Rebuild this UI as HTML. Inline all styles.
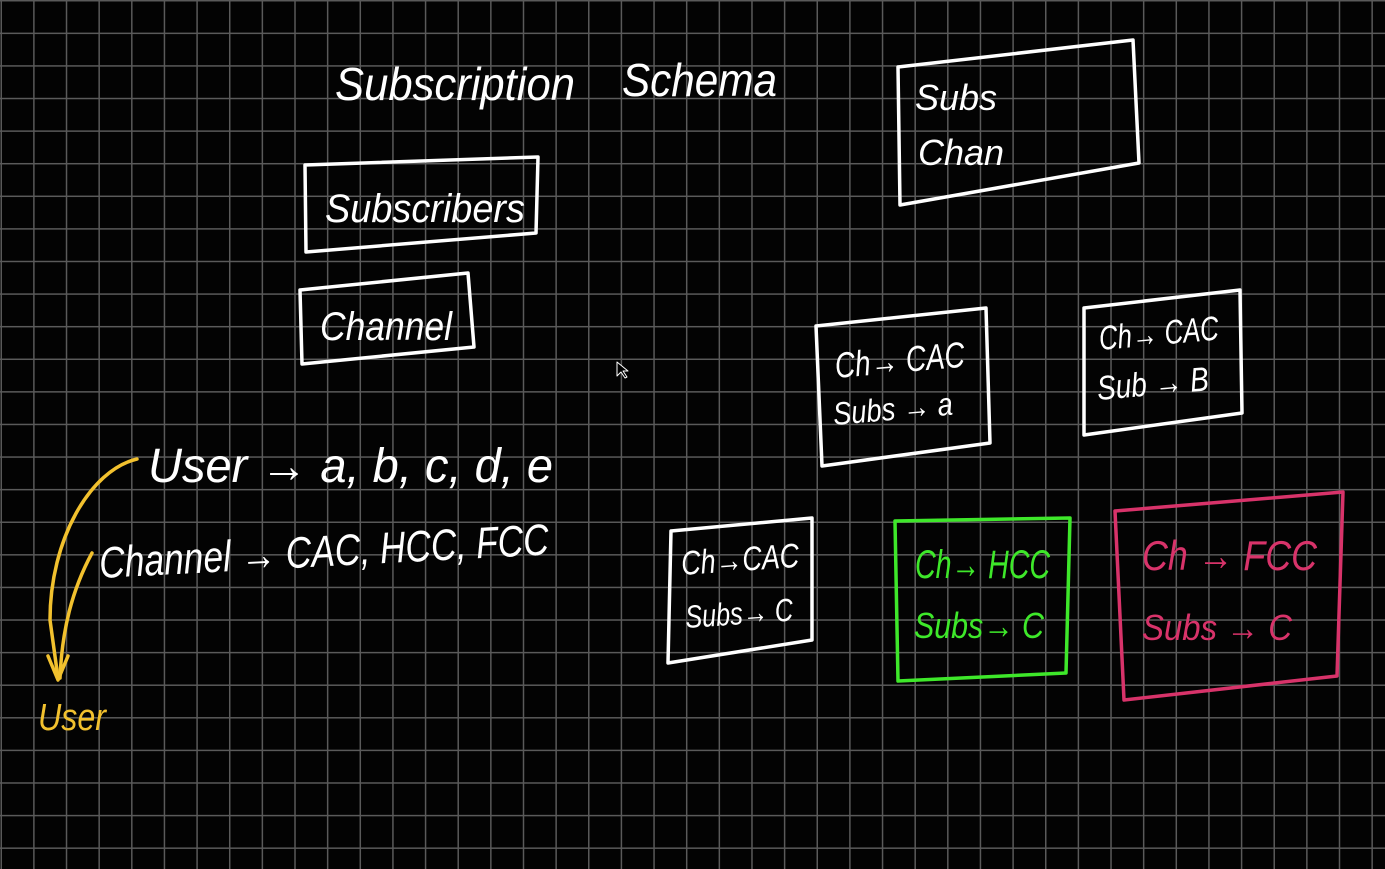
<!DOCTYPE html>
<html><head><style>
html,body{margin:0;padding:0;}
body{width:1385px;height:869px;overflow:hidden;background-color:#030303;
background-image:linear-gradient(to right,#5a5a5a 1.5px,transparent 1.5px),linear-gradient(to bottom,#5a5a5a 1.5px,transparent 1.5px);
background-size:32.65px 32.6px;background-position:0.5px 0px;}
svg{position:absolute;left:0;top:0;}
text{font-family:"Liberation Sans",sans-serif;font-style:italic;}
</style></head><body>
<svg width="1385" height="869" viewBox="0 0 1385 869" fill="none" stroke-linecap="round" stroke-linejoin="round">
<g fill="#fff" stroke="none">
<text x="335" y="100" font-size="46" textLength="240" lengthAdjust="spacingAndGlyphs">Subscription</text>
<text x="622" y="96" font-size="46" textLength="155" lengthAdjust="spacingAndGlyphs">Schema</text>
<text x="325" y="222" font-size="40" textLength="200" lengthAdjust="spacingAndGlyphs">Subscribers</text>
<text x="320" y="340" font-size="40" textLength="132" lengthAdjust="spacingAndGlyphs">Channel</text>
<text x="915" y="110" font-size="36">Subs</text>
<text x="918" y="165" font-size="36">Chan</text>
<text x="148" y="482" font-size="48" textLength="405" lengthAdjust="spacingAndGlyphs">User → a, b, c, d, e</text>
<text x="100" y="578" font-size="44" textLength="450" lengthAdjust="spacingAndGlyphs" transform="rotate(-3 100 578)">Channel → CAC, HCC, FCC</text>
<text x="836" y="378" font-size="36" textLength="130" lengthAdjust="spacingAndGlyphs" transform="rotate(-5 836 378)">Ch→ CAC</text>
<text x="834" y="425" font-size="32" textLength="120" lengthAdjust="spacingAndGlyphs" transform="rotate(-5 834 425)">Subs → a</text>
<text x="1100" y="350" font-size="34" textLength="120" lengthAdjust="spacingAndGlyphs" transform="rotate(-5 1100 350)">Ch→ CAC</text>
<text x="1098" y="400" font-size="34" textLength="112" lengthAdjust="spacingAndGlyphs" transform="rotate(-5 1098 400)">Sub → B</text>
<text x="682" y="575" font-size="34" textLength="118" lengthAdjust="spacingAndGlyphs" transform="rotate(-4 682 575)">Ch→CAC</text>
<text x="686" y="628" font-size="32" textLength="108" lengthAdjust="spacingAndGlyphs" transform="rotate(-4 686 628)">Subs→ C</text>
</g>
<g fill="#3ee82a" stroke="none">
<text x="915" y="578" font-size="40" textLength="135" lengthAdjust="spacingAndGlyphs">Ch→ HCC</text>
<text x="914" y="638" font-size="36" textLength="130" lengthAdjust="spacingAndGlyphs">Subs→ C</text>
</g>
<g fill="#d8336a" stroke="none">
<text x="1142" y="570" font-size="42" textLength="175" lengthAdjust="spacingAndGlyphs">Ch → FCC</text>
<text x="1142" y="640" font-size="36" textLength="150" lengthAdjust="spacingAndGlyphs">Subs → C</text>
</g>
<text x="38" y="730" font-size="38" fill="#f2c12e" textLength="68" lengthAdjust="spacingAndGlyphs">User</text>
<g stroke="#fff" stroke-width="3.5">
<path d="M305 165 L538 157 L536 233 L306 252 Z"/>
<path d="M300 290 L468 273 L474 347 L302 364 Z"/>
<path d="M898 67 L1133 40 L1139 163 L900 205 Z"/>
<path d="M816 326 L986 308 L990 443 L822 466 Z"/>
<path d="M1084 308 L1240 290 L1242 413 L1084 435 Z"/>
<path d="M671 531 L812 518 L812 640 L668 663 Z"/>
</g>
<path d="M895 521 L1070 518 L1066 673 L898 681 Z" stroke="#3ee82a" stroke-width="3.5"/>
<path d="M1115 511 L1343 492 L1337 676 L1124 700 Z" stroke="#d8336a" stroke-width="3.5"/>
<g stroke="#f2c12e" stroke-width="3.5">
<path d="M137 459 C90 470 50 540 50 620 L58 678"/>
<path d="M92 553 C72 590 62 630 60 678"/>
<path d="M48 656 L58 680 L68 656"/>
</g>
<path d="M617 362 L617 376 L621 372 L625 378 L627 377 L623 371 L628 371 Z" fill="#000" stroke="#fff" stroke-width="1"/>
</svg>
</body></html>
